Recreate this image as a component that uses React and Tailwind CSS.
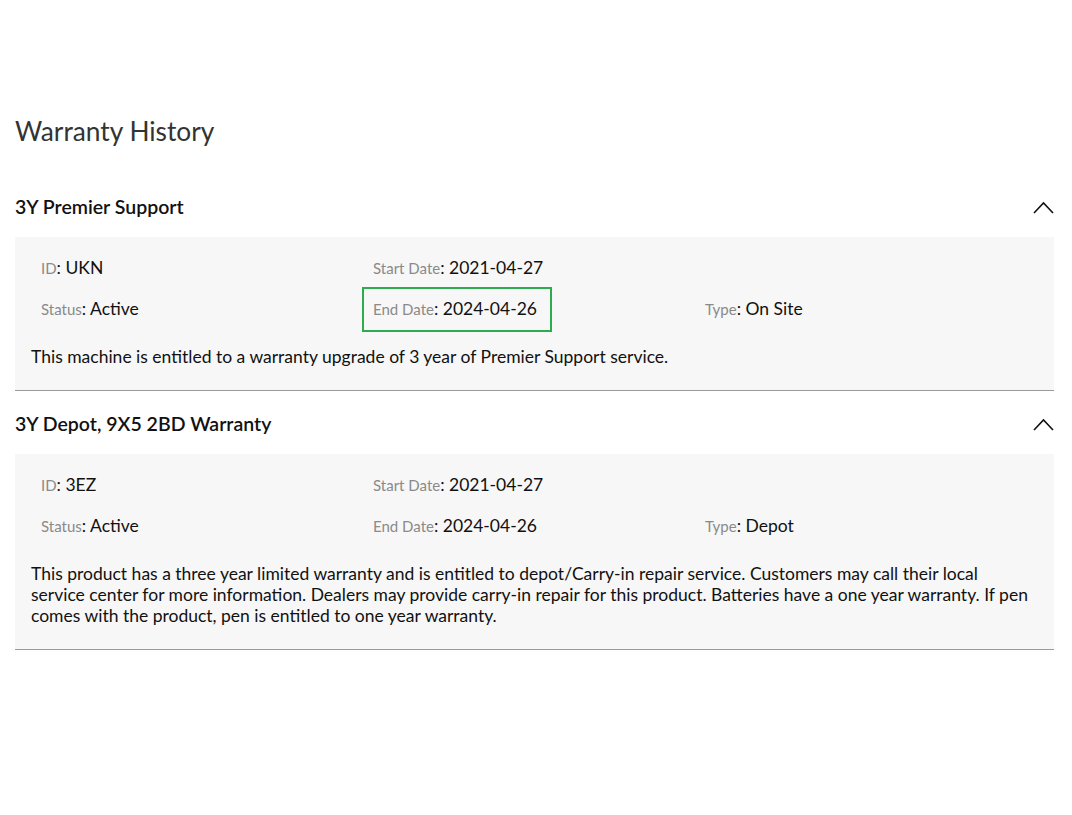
import React from "react";

const warranties = [
  {
    name: "3Y Premier Support",
    id: "UKN",
    status: "Active",
    start: "2021-04-27",
    end: "2024-04-26",
    type: "On Site",
    highlightEnd: true,
    description:
      "This machine is entitled to a warranty upgrade of 3 year of Premier Support service.",
  },
  {
    name: "3Y Depot, 9X5 2BD Warranty",
    id: "3EZ",
    status: "Active",
    start: "2021-04-27",
    end: "2024-04-26",
    type: "Depot",
    highlightEnd: false,
    description:
      "This product has a three year limited warranty and is entitled to depot/Carry-in repair service. Customers may call their local service center for more information. Dealers may provide carry-in repair for this product. Batteries have a one year warranty. If pen comes with the product, pen is entitled to one year warranty.",
  },
];

const Field = ({ label, value, highlight }) => (
  <div className="relative h-[24px] flex items-center whitespace-nowrap">
    <span className="text-[15px] text-[#8a8a8a]">{label}</span>
    <span className="text-[17.5px] text-[#111]">: {value}</span>
    {highlight && (
      <span className="absolute left-[-11px] top-[-10px] w-[190px] h-[45px] border-2 border-[#2dab4f]" />
    )}
  </div>
);

const ChevronUp = () => (
  <svg width="21" height="13" viewBox="0 0 21 13" fill="none">
    <polyline points="1,12 10.5,2 20,12" stroke="#111" strokeWidth="1.6" />
  </svg>
);

const WarrantyItem = ({ w }) => (
  <div className="pt-[10px]">
    <div className="h-[46px] flex items-center justify-between">
      <h2 className="text-[19.5px] font-semibold text-[#111]">{w.name}</h2>
      <ChevronUp />
    </div>
    <div className="mt-[7px] bg-[#f7f7f7] border-b border-[#9a9a9a] pt-[19px] pb-[23px] px-[16px]">
      <div className="grid grid-cols-[332px_332px_332px] gap-y-[17px] pl-[10px]">
        <Field label="ID" value={w.id} />
        <Field label="Start Date" value={w.start} />
        <div />
        <Field label="Status" value={w.status} />
        <Field label="End Date" value={w.end} highlight={w.highlightEnd} />
        <Field label="Type" value={w.type} />
      </div>
      <p className="mt-[25px] mr-[3px] text-[17.5px] leading-[21px] text-[#111]">{w.description}</p>
    </div>
  </div>
);

export default function App() {
  return (
    <div
      className="min-h-screen bg-white pl-[15px] pr-[18px] pt-[115px]"
      style={{ fontFamily: "Lato, 'Noto Sans', sans-serif" }}
    >
      <h1 className="text-[26.3px] leading-[32px] text-[#333] mb-[27px]">Warranty History</h1>
      {warranties.map((w) => (
        <WarrantyItem key={w.name} w={w} />
      ))}
    </div>
  );
}
